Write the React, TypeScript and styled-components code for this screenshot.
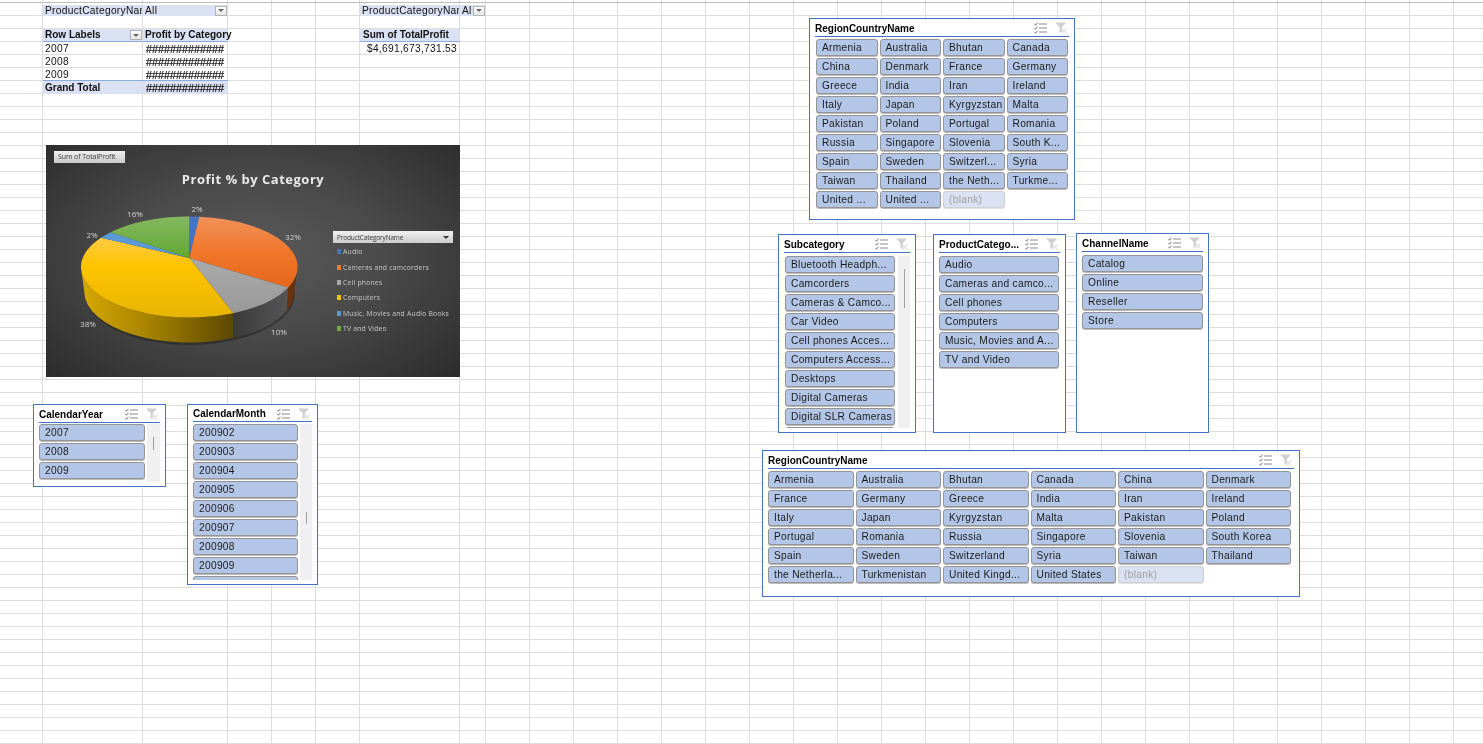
import * as React from 'react';
import styled, { createGlobalStyle } from 'styled-components';

const GRID_LINE = '#dddddd';
const COLUMN_LINES = [42, 142, 227, 271, 315, 359, 459, 485];
for (let x = 529; x < 1483; x += 44) COLUMN_LINES.push(x);

const columnStops = COLUMN_LINES.map(
    (x) => `transparent ${x}px, ${GRID_LINE} ${x}px, ${GRID_LINE} ${x + 1}px, transparent ${x + 1}px`,
).join(', ');

const GlobalStyle = createGlobalStyle`
    html, body {
        margin: 0;
        padding: 0;
        background: #fff;
        overflow: hidden;
    }
`;

const Sheet = styled.div`
    position: relative;
    width: 1483px;
    height: 744px;
    overflow: hidden;
    box-sizing: border-box;
    padding-top: 3px;
    display: grid;
    grid-template-columns: 43px 100px 85px 44px 44px 44px 100px 26px 1fr;
    grid-auto-rows: 13px;
    font-family: "Liberation Sans", Arial, sans-serif;
    color: #111;
    filter: blur(0.3px);
    background-color: #fff;
    background-image:
        linear-gradient(#bdbdbd, #bdbdbd),
        linear-gradient(to right, ${columnStops}),
        linear-gradient(to bottom, transparent 12px, ${GRID_LINE} 12px);
    background-repeat: no-repeat, no-repeat, repeat;
    background-size: 100% 1px, 100% 100%, 100% 13px;
    background-position: 0 2px, 0 0, 0 3px;
`;

const Cell = styled.div<{ $col: number; $row: number; $band?: boolean; $bold?: boolean; $clip?: boolean; $right?: boolean; $ruleTop?: boolean; $ruleBottom?: boolean; $slim?: boolean; $indent?: number }>`
    grid-column: ${(p) => p.$col};
    grid-row: ${(p) => p.$row};
    display: flex;
    align-items: center;
    justify-content: ${(p) => (p.$right ? 'flex-end' : 'space-between')};
    box-sizing: border-box;
    margin-top: ${(p) => (p.$slim ? '2px' : '0')};
    padding: 0 ${(p) => (p.$right ? '3px' : '0')} 0 ${(p) => p.$indent ?? 2}px;
    background: ${(p) => (p.$band ? '#d9e1f2' : 'transparent')};
    border-right: ${(p) => (p.$band ? `1px solid ${GRID_LINE}` : 'none')};
    border-bottom: ${(p) => (p.$ruleBottom ? '1px solid #8ea9db' : 'none')};
    box-shadow: ${(p) => (p.$ruleTop ? '0 -1px 0 #8ea9db' : 'none')};
    font-size: ${(p) => (p.$bold ? '10px' : '10.2px')};
    letter-spacing: ${(p) => (p.$bold ? '0' : '0.3px')};
    font-weight: ${(p) => (p.$bold ? 700 : 400)};
    line-height: 12px;
    white-space: nowrap;
    min-width: 0;
    overflow: ${(p) => (p.$clip ? 'hidden' : 'visible')};
`;

const Hashes = styled.span`
    font-size: 10.8px;
    font-weight: 400;
    letter-spacing: 0;
    -webkit-text-stroke: 0.2px #111;
`;

const DropButton = styled.span`
    flex: none;
    display: flex;
    align-items: center;
    justify-content: center;
    box-sizing: border-box;
    width: 12px;
    height: 10px;
    margin-left: auto;
    border: 1px solid #b4b4b4;
    background: linear-gradient(#fff, #e6e6e6);
    &::after {
        content: '';
        border-left: 3px solid transparent;
        border-right: 3px solid transparent;
        border-top: 3px solid #666;
    }
`;

const Chart = styled.section`
    position: absolute;
    left: 46px;
    top: 145px;
    width: 414px;
    height: 232px;
    box-sizing: border-box;
    padding-top: 6px;
    background: radial-gradient(ellipse at 50% 48%, #5a5a5a 0%, #4a4a4a 45%, #2c2c2c 100%);
    font-family: "Open Sans", sans-serif;
`;

const FieldButton = styled.div`
    width: 71px;
    height: 12px;
    margin-left: 8px;
    box-sizing: border-box;
    padding-left: 4px;
    background: linear-gradient(#f0f0f0, #c9c9c9);
    color: #3a3a3a;
    font-size: 7px;
    line-height: 12px;
    letter-spacing: -0.08px;
    white-space: nowrap;
`;

const ChartTitle = styled.h2`
    margin: 6px 0 11px;
    height: 20px;
    text-align: center;
    color: #e9e9e9;
    font-size: 13px;
    font-weight: 700;
    line-height: 20px;
    letter-spacing: 0.5px;
`;

const ChartBody = styled.div`
    display: flex;
    align-items: flex-start;
`;

const PieSvg = styled.svg`
    flex: none;
    display: block;
`;

const Legend = styled.div`
    margin: 31px 0 0 3px;
    width: 120px;
`;

const LegendHeader = styled.div`
    display: flex;
    align-items: center;
    justify-content: space-between;
    box-sizing: border-box;
    height: 12px;
    margin-bottom: 1px;
    padding: 0 4px;
    background: linear-gradient(#f0f0f0, #cdcdcd);
    color: #3a3a3a;
    font-size: 6.5px;
    letter-spacing: -0.15px;
    &::after {
        content: '';
        border-left: 3px solid transparent;
        border-right: 3px solid transparent;
        border-top: 3px solid #333;
    }
`;

const LegendRow = styled.div`
    display: flex;
    align-items: center;
    height: 15.4px;
    padding-left: 4px;
    gap: 2px;
    color: #c8c8c8;
    font-size: 6.8px;
    letter-spacing: 0.22px;
    white-space: nowrap;
`;

const Swatch = styled.i<{ $color: string }>`
    flex: none;
    width: 4px;
    height: 5px;
    background: ${(p) => p.$color};
`;

const PieLabel = styled.text`
    fill: #d4d4d4;
    font-family: "Open Sans", sans-serif;
    font-size: 8px;
    text-anchor: middle;
`;

const SlicerBox = styled.section<{ $x: number; $y: number; $w: number; $h: number; $rule: number; $gap: number }>`
    position: absolute;
    left: ${(p) => p.$x}px;
    top: ${(p) => p.$y}px;
    width: ${(p) => p.$w}px;
    height: ${(p) => p.$h}px;
    box-sizing: border-box;
    display: grid;
    grid-template-rows: ${(p) => p.$rule}px 1fr;
    grid-template-columns: minmax(0, 1fr);
    row-gap: ${(p) => p.$gap}px;
    padding: 0 5px 4px;
    background: #fff;
    border: 1px solid #4472c4;
`;

const SlicerHead = styled.header`
    display: flex;
    align-items: center;
    gap: 8px;
    padding: 1px 1px 0 0;
    border-bottom: 1px solid #4472c4;
    min-width: 0;
`;

const SlicerTitle = styled.h3`
    flex: 1;
    min-width: 0;
    margin: 1px 0 0;
    font-size: 10px;
    font-weight: 700;
    line-height: 12px;
    color: #000;
    white-space: nowrap;
`;

const SlicerIcon = styled.svg`
    flex: none;
    display: block;
`;

const SlicerBody = styled.div`
    display: flex;
    gap: 2px;
    min-height: 0;
`;

const ClippedList = styled.div`
    flex: 1;
    min-width: 0;
    height: 100%;
    overflow: hidden;
    display: flex;
`;

const ButtonGrid = styled.div<{ $cols: number; $inset: number; $trim: number }>`
    flex: 1;
    min-width: 0;
    align-self: flex-start;
    display: grid;
    grid-template-columns: repeat(${(p) => p.$cols}, minmax(0, 1fr));
    grid-auto-rows: 17px;
    gap: 2px;
    padding: 0 ${(p) => p.$trim}px 0 ${(p) => p.$inset}px;
`;

const ItemButton = styled.div<{ $blank?: boolean }>`
    display: flex;
    align-items: center;
    box-sizing: border-box;
    padding: 1px 0 0 5px;
    border: 1px solid ${(p) => (p.$blank ? '#d0d0d0' : '#949494')};
    border-radius: 3px;
    box-shadow: 0 1px 0 ${(p) => (p.$blank ? '#e2e2e2' : '#bcbcbc')};
    background: ${(p) => (p.$blank ? '#d9e1f2' : '#b4c6e7')};
    color: ${(p) => (p.$blank ? '#a0a0a0' : '#1a1a1a')};
    font-size: 10.2px;
    letter-spacing: 0.3px;
    line-height: 12px;
    white-space: nowrap;
    overflow: hidden;
`;

const ScrollTrack = styled.div<{ $w: number; $top: number; $len: number }>`
    flex: none;
    width: ${(p) => p.$w}px;
    height: 100%;
    box-sizing: border-box;
    padding-top: ${(p) => p.$top}px;
    display: flex;
    justify-content: center;
    background: #f0f0f0;
    &::before {
        content: '';
        width: 1px;
        height: ${(p) => p.$len}px;
        background: #a0a0a0;
    }
`;

function MultiSelectIcon(): React.JSX.Element {
    return (
        <SlicerIcon width="13" height="12" viewBox="0 0 13 12" fill="none">
            <path d="M0.5 2l1 1 2-2.2M0.5 6l1 1 2-2.2M0.5 10l1 1 2-2.2" stroke="#9a9a9a" strokeWidth="1.1" />
            <path d="M5 2h8M5 6h8M5 10h8" stroke="#8a8a8a" strokeWidth="1" />
        </SlicerIcon>
    );
}

function ClearFilterIcon(): React.JSX.Element {
    return (
        <SlicerIcon width="13" height="12" viewBox="0 0 13 12" fill="none">
            <path d="M0 0.5h11L7 5v4.5L4.5 11V5z" fill="#cfcfcf" />
            <path d="M6.5 6.5l5 5M11.5 6.5l-5 5" stroke="#e2e2e2" strokeWidth="1.2" />
        </SlicerIcon>
    );
}

interface SlicerProps {
    title: string;
    items: string[];
    x: number;
    y: number;
    w: number;
    h: number;
    rule: number;
    gap: number;
    cols?: number;
    inset?: number;
    trim?: number;
    scroll?: { w: number; top: number; len: number };
}

function Slicer(props: SlicerProps): React.JSX.Element {
    const { title, items, x, y, w, h, rule, gap, cols = 1, inset = 0, trim = 0, scroll } = props;
    return (
        <SlicerBox $x={x} $y={y} $w={w} $h={h} $rule={rule} $gap={gap}>
            <SlicerHead>
                <SlicerTitle>{title}</SlicerTitle>
                <MultiSelectIcon />
                <ClearFilterIcon />
            </SlicerHead>
            <SlicerBody>
                <ClippedList>
                    <ButtonGrid $cols={cols} $inset={inset} $trim={trim}>
                        {items.map((item, i) => (
                            <ItemButton key={i} $blank={item === '(blank)'}>
                                {item}
                            </ItemButton>
                        ))}
                    </ButtonGrid>
                </ClippedList>
                {scroll && <ScrollTrack $w={scroll.w} $top={scroll.top} $len={scroll.len} />}
            </SlicerBody>
        </SlicerBox>
    );
}

const COUNTRIES_SHORT = [
    'Armenia', 'Australia', 'Bhutan', 'Canada', 'China', 'Denmark', 'France', 'Germany', 'Greece', 'India', 'Iran', 'Ireland',
    'Italy', 'Japan', 'Kyrgyzstan', 'Malta', 'Pakistan', 'Poland', 'Portugal', 'Romania', 'Russia', 'Singapore', 'Slovenia', 'South K...',
    'Spain', 'Sweden', 'Switzerl...', 'Syria', 'Taiwan', 'Thailand', 'the Neth...', 'Turkme...', 'United ...', 'United ...', '(blank)',
];

const COUNTRIES_WIDE = [
    'Armenia', 'Australia', 'Bhutan', 'Canada', 'China', 'Denmark', 'France', 'Germany', 'Greece', 'India', 'Iran', 'Ireland',
    'Italy', 'Japan', 'Kyrgyzstan', 'Malta', 'Pakistan', 'Poland', 'Portugal', 'Romania', 'Russia', 'Singapore', 'Slovenia', 'South Korea',
    'Spain', 'Sweden', 'Switzerland', 'Syria', 'Taiwan', 'Thailand', 'the Netherla...', 'Turkmenistan', 'United Kingd...', 'United States', '(blank)',
];

const SUBCATEGORIES = [
    'Bluetooth Headph...', 'Camcorders', 'Cameras & Camco...', 'Car Video', 'Cell phones Acces...', 'Computers Access...',
    'Desktops', 'Digital Cameras', 'Digital SLR Cameras', '',
];

const CATEGORIES = ['Audio', 'Cameras and camco...', 'Cell phones', 'Computers', 'Music, Movies and A...', 'TV and Video'];
const CHANNELS = ['Catalog', 'Online', 'Reseller', 'Store'];
const MONTHS = ['200902', '200903', '200904', '200905', '200906', '200907', '200908', '200909', ''];

const LEGEND = [
    { name: 'Audio', color: '#4472c4' },
    { name: 'Cameras and camcorders', color: '#ed7d31' },
    { name: 'Cell phones', color: '#a5a5a5' },
    { name: 'Computers', color: '#ffc000' },
    { name: 'Music, Movies and Audio Books', color: '#5b9bd5' },
    { name: 'TV and Video', color: '#70ad47' },
];

// top face and bottom rim of the pie, the bottom one a bit narrower for the perspective
const CX = 189.3;
const TOP = { cy: 267, rx: 108.3, ry: 50.5 };
const RIM = { cy: 292, rx: 105, ry: 50.5 };

function onEllipse(e: typeof TOP, x: number, lower: boolean): string {
    const t = (x - CX) / e.rx;
    const dy = e.ry * Math.sqrt(Math.max(0, 1 - t * t));
    return `${x} ${lower ? e.cy + dy : e.cy - dy}`;
}

const slice = (from: string, to: string) => `M${CX} 258L${from}A${TOP.rx} ${TOP.ry} 0 0 1 ${to}Z`;

function wall(x1: number, x2: number, rimX1: number, rimX2: number): string {
    // x1 is the right end of the piece, the arcs run along the front of the pie
    return `M${onEllipse(TOP, x1, true)}L${onEllipse(RIM, rimX1, true)}A${RIM.rx} ${RIM.ry} 0 0 1 ${onEllipse(RIM, rimX2, true)}`
        + `L${onEllipse(TOP, x2, true)}A${TOP.rx} ${TOP.ry} 0 0 0 ${onEllipse(TOP, x1, true)}Z`;
}

const A = onEllipse(TOP, CX, false);
const B = onEllipse(TOP, 199.3, false);
const C = onEllipse(TOP, 288.3, true);
const D = onEllipse(TOP, 233.3, true);
const E = onEllipse(TOP, 101, false);
const F = onEllipse(TOP, 110.7, false);

function Pie(): React.JSX.Element {
    return (
        <PieSvg width="284" height="150" viewBox="46 200 284 150">
            <defs>
                <linearGradient id="wallGold" x1="0" x2="1" y1="0" y2="0">
                    <stop offset="0" stopColor="#d6a800" />
                    <stop offset="0.45" stopColor="#a68200" />
                    <stop offset="1" stopColor="#5b4800" />
                </linearGradient>
                <linearGradient id="wallGrey" x1="0" x2="1" y1="0" y2="0">
                    <stop offset="0" stopColor="#3a3a3a" />
                    <stop offset="1" stopColor="#565656" />
                </linearGradient>
                <linearGradient id="topOrange" x1="0" x2="0" y1="0" y2="1">
                    <stop offset="0" stopColor="#f0915a" />
                    <stop offset="0.5" stopColor="#f0762a" />
                    <stop offset="1" stopColor="#e5681c" />
                </linearGradient>
                <linearGradient id="topGold" x1="0" x2="0" y1="0" y2="1">
                    <stop offset="0" stopColor="#ffcb45" />
                    <stop offset="0.35" stopColor="#ffc400" />
                    <stop offset="1" stopColor="#e6b400" />
                </linearGradient>
                <linearGradient id="topGreen" x1="0" x2="0" y1="0" y2="1">
                    <stop offset="0" stopColor="#85b860" />
                    <stop offset="1" stopColor="#62a733" />
                </linearGradient>
                <linearGradient id="topGrey" x1="0" x2="0" y1="0" y2="1">
                    <stop offset="0" stopColor="#aaa" />
                    <stop offset="1" stopColor="#999" />
                </linearGradient>
            </defs>
            <ellipse cx="190" cy="294" rx="105" ry="51" fill="#000" opacity="0.28" />
            <path d={wall(233.3, 81, 233.3, 84.3)} fill="url(#wallGold)" />
            <path d={wall(288.3, 233.3, 287, 233.3)} fill="url(#wallGrey)" />
            <path d={wall(297.6, 288.3, 294.3, 287)} fill="#6a3310" />
            <path d={slice(A, B)} fill="#4472c4" />
            <path d={slice(B, C)} fill="url(#topOrange)" />
            <path d={slice(C, D)} fill="url(#topGrey)" />
            <path d={slice(D, E)} fill="url(#topGold)" />
            <path d={slice(E, F)} fill="#5b9bd5" />
            <path d={slice(F, A)} fill="url(#topGreen)" />
            <PieLabel x="197" y="212">2%</PieLabel>
            <PieLabel x="135" y="217">16%</PieLabel>
            <PieLabel x="92" y="237.5">2%</PieLabel>
            <PieLabel x="293" y="240">32%</PieLabel>
            <PieLabel x="88" y="327">38%</PieLabel>
            <PieLabel x="279" y="335">10%</PieLabel>
        </PieSvg>
    );
}

export default function App(): React.JSX.Element {
    return (
        <>
            <GlobalStyle />
            <Sheet>
                <Cell $col={2} $row={1} $band $clip $slim>ProductCategoryName</Cell>
                <Cell $col={3} $row={1} $band $slim>All<DropButton /></Cell>
                <Cell $col={2} $row={3} $band $bold $ruleBottom>Row Labels<DropButton /></Cell>
                <Cell $col={3} $row={3} $band $bold $ruleBottom>Profit by Category</Cell>
                <Cell $col={2} $row={4}>2007</Cell>
                <Cell $col={3} $row={4} $indent={3}><Hashes>#############</Hashes></Cell>
                <Cell $col={2} $row={5}>2008</Cell>
                <Cell $col={3} $row={5} $indent={3}><Hashes>#############</Hashes></Cell>
                <Cell $col={2} $row={6}>2009</Cell>
                <Cell $col={3} $row={6} $indent={3}><Hashes>#############</Hashes></Cell>
                <Cell $col={2} $row={7} $band $bold $ruleTop>Grand Total</Cell>
                <Cell $col={3} $row={7} $band $bold $ruleTop $indent={3}><Hashes>#############</Hashes></Cell>

                <Cell $col={7} $row={1} $band $clip $slim>ProductCategoryName</Cell>
                <Cell $col={8} $row={1} $band $clip $slim>Al<DropButton /></Cell>
                <Cell $col={7} $row={3} $band $bold $ruleBottom $indent={3}>Sum of TotalProfit</Cell>
                <Cell $col={7} $row={4} $right>$4,691,673,731.53</Cell>

                <Chart>
                    <FieldButton>Sum of TotalProfit</FieldButton>
                    <ChartTitle>Profit % by Category</ChartTitle>
                    <ChartBody>
                        <Pie />
                        <Legend>
                            <LegendHeader>ProductCategoryName</LegendHeader>
                            {LEGEND.map((entry) => (
                                <LegendRow key={entry.name}>
                                    <Swatch $color={entry.color} />
                                    {entry.name}
                                </LegendRow>
                            ))}
                        </Legend>
                    </ChartBody>
                </Chart>

                <Slicer title="RegionCountryName" items={COUNTRIES_SHORT} x={809} y={18} w={266} h={202} rule={18} gap={2} cols={4} inset={1} trim={1} />
                <Slicer title="Subcategory" items={SUBCATEGORIES} x={778} y={234} w={138} h={199} rule={18} gap={3} inset={1} trim={1} scroll={{ w: 12, top: 13, len: 39 }} />
                <Slicer title="ProductCatego..." items={CATEGORIES} x={933} y={234} w={133} h={199} rule={18} gap={3} trim={1} />
                <Slicer title="ChannelName" items={CHANNELS} x={1076} y={233} w={133} h={200} rule={18} gap={3} />
                <Slicer title="RegionCountryName" items={COUNTRIES_WIDE} x={762} y={450} w={538} h={147} rule={18} gap={2} cols={6} trim={3} />
                <Slicer title="CalendarYear" items={['2007', '2008', '2009']} x={33} y={404} w={133} h={83} rule={18} gap={1} scroll={{ w: 13, top: 13, len: 13 }} />
                <Slicer title="CalendarMonth" items={MONTHS} x={187} y={404} w={131} h={181} rule={17} gap={2} scroll={{ w: 12, top: 88, len: 12 }} />
            </Sheet>
        </>
    );
}
